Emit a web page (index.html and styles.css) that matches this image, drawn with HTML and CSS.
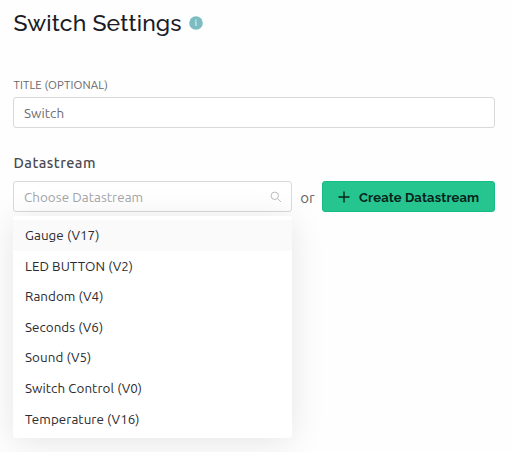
FILE: index.html
```html
<!DOCTYPE html>
<html lang="en">
<head>
<meta charset="utf-8">
<title>Switch Settings</title>
<link rel="stylesheet" href="styles.css">
</head>
<body>
<main class="settings">
  <header class="header">
    <h1 class="title">Switch Settings</h1>
    <svg class="info" viewBox="0 0 14 14" aria-hidden="true"><circle cx="7" cy="7" r="6.8" fill="#7bbdc3"/><path d="M6 6h1v4" fill="none" stroke="#e4f5f5"/><circle cx="7" cy="4.2" r=".7" fill="#e4f5f5"/></svg>
  </header>
  <label class="caption" for="title">TITLE (OPTIONAL)</label>
  <input class="field" id="title" type="text" value="Switch">
  <h2 class="section">Datastream</h2>
  <div class="row">
    <div class="select">
      <div class="field select-box">
        <span class="placeholder">Choose Datastream</span>
        <svg class="search" viewBox="0 0 12 12" fill="none" stroke="#bdbdbd" aria-hidden="true"><circle cx="4.8" cy="4.8" r="3.7"/><path d="M7.5 7.5l3.6 3.6"/></svg>
      </div>
      <ul class="menu">
        <li class="option active">Gauge (V17)</li>
        <li class="option">LED BUTTON (V2)</li>
        <li class="option">Random (V4)</li>
        <li class="option">Seconds (V6)</li>
        <li class="option">Sound (V5)</li>
        <li class="option">Switch Control (V0)</li>
        <li class="option">Temperature (V16)</li>
      </ul>
    </div>
    <span class="or">or</span>
    <button class="create" type="button">
      <svg class="plus" viewBox="0 0 12 12" stroke="#06231a" stroke-width="1.4" aria-hidden="true"><path d="M6 .5v11M.5 6h11"/></svg>
      <span>Create Datastream</span>
    </button>
  </div>
</main>
</body>
</html>
```
FILE: styles.css
```css
* { box-sizing: border-box; }

body {
  margin: 0;
  height: 452px;
  overflow: hidden;
  background: #fefefe;
  color: #2b2b30;
  font-family: Ubuntu, "Noto Sans", sans-serif;
  font-size: 13.4px;
  letter-spacing: .06px;
}

.settings { padding: 8px 17px 0 13px; }

.header {
  display: flex;
  align-items: center;
  gap: 7px;
  height: 30px;
}

.title {
  margin: 0;
  padding-left: .5px;
  color: #1c1c26;
  font: 500 23px/30px Raleway, Lato, sans-serif;
  letter-spacing: .15px;
  white-space: nowrap;
}

.info { width: 14px; height: 14px; }

.caption {
  display: block;
  margin-top: 39px;
  height: 20px;
  color: #66666a;
  font-size: 11.4px;
  line-height: 16px;
  letter-spacing: .12px;
  padding-left: .5px;
}

.field {
  display: block;
  width: 100%;
  height: 31px;
  padding: 2px 10px 0;
  border: 1px solid #d9d9d9;
  border-radius: 3px;
  background: #fff;
  color: #6c6c70;
  font: inherit;
  letter-spacing: .06px;
}

.section {
  margin: 25px 0 0;
  padding-left: .5px;
  height: 28px;
  color: #4a4a52;
  font-size: 14.5px;
  font-weight: 500;
  line-height: 20px;
  letter-spacing: .45px;
}

.row { display: flex; align-items: center; }

.select { position: relative; width: 279px; }

.select-box {
  display: flex;
  align-items: center;
  justify-content: space-between;
  padding: 1px 9px 0 10px;
}

.placeholder { color: #a5a5a8; }

.search { width: 12px; height: 12px; }

.menu {
  position: absolute;
  top: 35px;
  left: 0;
  width: 279px;
  margin: 0;
  padding: 4px 0 3.6px;
  border-radius: 3px;
  background: #fff;
  box-shadow: 0 4px 34px rgba(0, 0, 0, .1);
  list-style: none;
}

.option {
  height: 30.6px;
  padding: 0 12px;
  line-height: 31px;
  white-space: nowrap;
}

.active { background: #fafafa; }

.or {
  width: 30px;
  padding: 1px 0 0 1px;
  color: #66666a;
  font-size: 15px;
  text-align: center;
}

.create {
  display: flex;
  align-items: center;
  gap: 9px;
  width: 173px;
  height: 31px;
  padding: 1px 0 0 15px;
  border: 1px solid #13bd83;
  border-radius: 3px;
  background: #26c590;
  color: #06231a;
  font: 700 13px Raleway, Lato, sans-serif;
  letter-spacing: .16px;
  white-space: nowrap;
}

.plus { width: 12px; height: 12px; }
```
